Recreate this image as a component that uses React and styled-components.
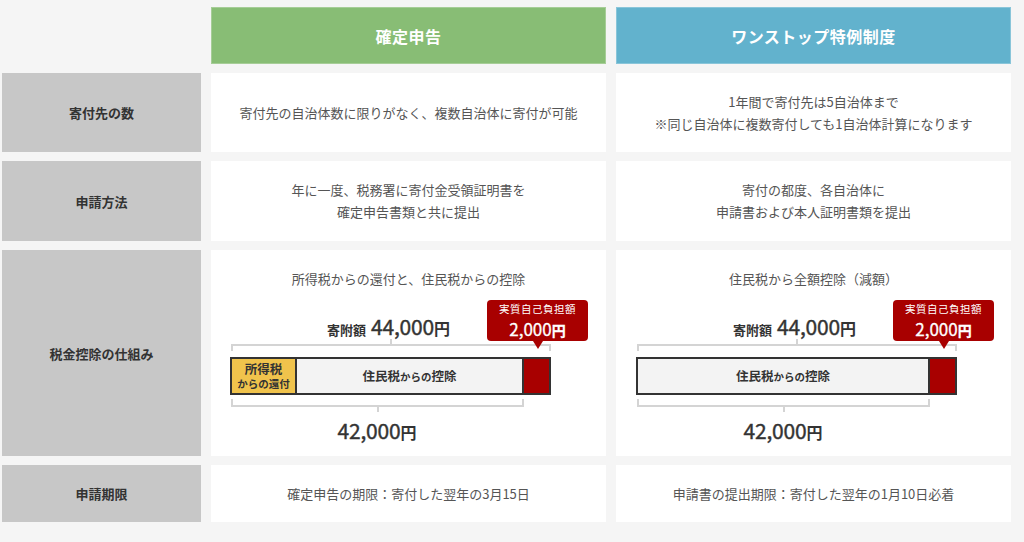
import React from "react";
import styled, { createGlobalStyle } from "styled-components";

const GlobalStyle = createGlobalStyle`
  html, body {
    margin: 0;
    background: #f5f5f5;
  }
  body {
    font-family: "Noto Sans CJK JP", "Noto Sans", sans-serif;
    color: #555;
  }
`;

const Table = styled.div`
  display: grid;
  grid-template-columns: 199px 395px 395px;
  grid-template-rows: 57px 79px 80px 206px 57px;
  column-gap: 10px;
  row-gap: 9px;
  padding: 7px 0 0 2px;
`;

const Corner = styled.div``;

const HeadCell = styled.div`
  background: ${(p) => p.$bg};
  box-shadow: inset 0 0 0 1px rgba(255, 255, 255, 0.25);
  color: #fff;
  font-size: 16px;
  font-weight: 700;
  letter-spacing: 0.5px;
  display: flex;
  align-items: center;
  justify-content: center;
`;

const Label = styled.div`
  background: #c7c7c7;
  color: #333;
  font-size: 13px;
  font-weight: 700;
  display: flex;
  align-items: center;
  justify-content: center;
`;

const Cell = styled.div`
  background: #fff;
  font-size: 13px;
  line-height: 22px;
  text-align: center;
  display: flex;
  flex-direction: column;
  align-items: center;
  justify-content: center;
`;

const DiagramCell = styled.div`
  background: #fff;
  display: flex;
  flex-direction: column;
  align-items: center;
  padding-top: 18px;
  box-sizing: border-box;
`;

const Heading = styled.div`
  font-size: 13px;
  line-height: 22px;
`;

const Chart = styled.div`
  position: relative;
  align-self: flex-start;
  margin-left: ${(p) => p.$offset}px;
  margin-top: 22px;
  width: 321px;
`;

const Total = styled.div`
  display: flex;
  justify-content: center;
  align-items: baseline;
  width: 317px;
  height: 28px;
  line-height: 28px;
  color: #333;
`;

const TotalLabel = styled.span`
  font-size: 13px;
  font-weight: 700;
  margin-right: 5px;
`;

const Amount = styled.span`
  font-size: 21px;
  font-weight: 400;
  letter-spacing: -0.2px;
  -webkit-text-stroke: 0.4px #333;
`;

const Yen = styled.span`
  font-size: 16px;
  font-weight: 700;
`;

const Bracket = styled.div`
  position: relative;
  box-sizing: border-box;
  width: ${(p) => p.$width}px;
  height: ${(p) => (p.$down ? 8 : 7)}px;
  margin-left: 1px;
  margin-top: 4px;
  border: 2px solid #d4d4d4;
  ${(p) => (p.$down ? "border-top: none;" : "border-bottom: none;")}

  &::before {
    content: "";
    position: absolute;
    left: 50%;
    width: 2px;
    height: 7px;
    margin-left: -1px;
    background: #d4d4d4;
    ${(p) => (p.$down ? "top: 100%;" : "bottom: 100%;")}
  }
`;

const Bar = styled.div`
  display: flex;
  box-sizing: border-box;
  height: 38px;
  margin-top: 6px;
  border: 2px solid #333;
`;

const Segment = styled.div`
  width: ${(p) => (p.$width ? `${p.$width}px` : "auto")};
  flex: ${(p) => (p.$width ? "none" : 1)};
  background: ${(p) => p.$bg};
  border-right: ${(p) => (p.$last ? "none" : "2px solid #333")};
  color: #333;
  font-weight: 700;
  display: flex;
  flex-direction: column;
  align-items: center;
  justify-content: center;
  font-size: 12.5px;
  line-height: 15px;
`;

const Small = styled.span`
  font-size: 10.5px;
`;

const Result = styled.div`
  width: 294px;
  display: flex;
  justify-content: center;
  align-items: baseline;
  line-height: 28px;
  margin-top: 9px;
  color: #333;
`;

const Callout = styled.div`
  position: absolute;
  left: 257px;
  top: -12px;
  width: 101px;
  height: 41px;
  box-sizing: border-box;
  background: #a80000;
  border-radius: 4px;
  color: #fff;
  text-align: center;

  &::after {
    content: "";
    position: absolute;
    top: 100%;
    left: 50%;
    margin-left: -5px;
    border-left: 5px solid transparent;
    border-right: 5px solid transparent;
    border-top: 8px solid #a80000;
  }
`;

const CalloutTitle = styled.div`
  font-size: 10.5px;
  line-height: 16px;
  letter-spacing: 0.5px;
  padding-top: 1px;
`;

const CalloutAmount = styled.div`
  font-size: 17px;
  line-height: 24px;
  -webkit-text-stroke: 0.3px #fff;
`;

const Yen2 = styled.span`
  font-size: 14px;
  font-weight: 700;
`;

const Diagram = ({ heading, offset, withRefund }) => (
  <DiagramCell>
    <Heading>{heading}</Heading>
    <Chart $offset={offset}>
      <Total>
        <TotalLabel>寄附額</TotalLabel>
        <Amount>44,000</Amount>
        <Yen>円</Yen>
      </Total>
      <Bracket $width={320} />
      <Bar>
        {withRefund && (
          <Segment $width={63} $bg="#f0c34c">
            <span>所得税</span>
            <Small>からの還付</Small>
          </Segment>
        )}
        <Segment $bg="#f3f3f3">
          <span>
            住民税<Small>からの</Small>控除
          </span>
        </Segment>
        <Segment $width={25} $bg="#a80000" $last />
      </Bar>
      <Bracket $width={293} $down />
      <Result>
        <Amount>42,000</Amount>
        <Yen>円</Yen>
      </Result>
      <Callout>
        <CalloutTitle>実質自己負担額</CalloutTitle>
        <CalloutAmount>
          2,000<Yen2>円</Yen2>
        </CalloutAmount>
      </Callout>
    </Chart>
  </DiagramCell>
);

export default function App() {
  return (
    <>
      <GlobalStyle />
      <Table>
        <Corner />
        <HeadCell $bg="#88bd75">確定申告</HeadCell>
        <HeadCell $bg="#62b2cd">ワンストップ特例制度</HeadCell>

        <Label>寄付先の数</Label>
        <Cell>寄付先の自治体数に限りがなく、複数自治体に寄付が可能</Cell>
        <Cell>
          <div>1年間で寄付先は5自治体まで</div>
          <div>※同じ自治体に複数寄付しても1自治体計算になります</div>
        </Cell>

        <Label>申請方法</Label>
        <Cell>
          <div>年に一度、税務署に寄付金受領証明書を</div>
          <div>確定申告書類と共に提出</div>
        </Cell>
        <Cell>
          <div>寄付の都度、各自治体に</div>
          <div>申請書および本人証明書類を提出</div>
        </Cell>

        <Label>税金控除の仕組み</Label>
        <Diagram heading="所得税からの還付と、住民税からの控除" offset={19} withRefund />
        <Diagram heading="住民税から全額控除（減額）" offset={20} />

        <Label>申請期限</Label>
        <Cell>確定申告の期限：寄付した翌年の3月15日</Cell>
        <Cell>申請書の提出期限：寄付した翌年の1月10日必着</Cell>
      </Table>
    </>
  );
}
